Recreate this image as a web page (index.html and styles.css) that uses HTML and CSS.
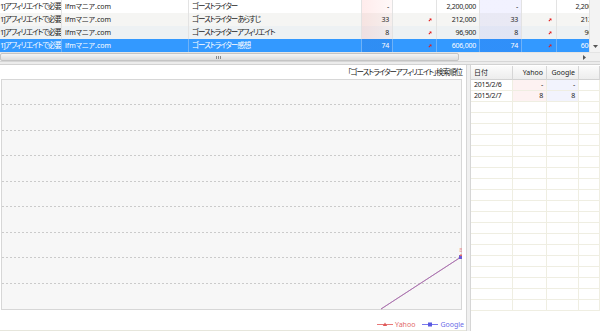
FILE: index.html
```html
<!DOCTYPE html>
<html lang="ja">
<head>
<meta charset="utf-8">
<title>検索順位</title>
<link rel="stylesheet" href="styles.css">
</head>
<body>
<div class="app">
  <div class="top">
    <div class="grid-wrap">
      <div class="grid">
        <div class="row r1">
          <div class="cell c1 jp">1]アフィリエイトで必要!!</div>
          <div class="cell">lfmマニア.com</div>
          <div class="cell jp">ゴーストライター</div>
          <div class="cell num ya">-</div>
          <div class="cell arr"></div>
          <div class="cell num">2,200,000</div>
          <div class="cell num go">-</div>
          <div class="cell arr"></div>
          <div class="cell num">2,200,000</div>
        </div>
        <div class="row r2">
          <div class="cell c1 jp">1]アフィリエイトで必要!!</div>
          <div class="cell">lfmマニア.com</div>
          <div class="cell jp">ゴーストライターあらすじ</div>
          <div class="cell num ya">33</div>
          <div class="cell arr"><svg class="up" viewBox="0 0 6 6"><path d="M1.2 4.8L4.2 1.8" /><polygon points="2,0.8 5.2,0.8 5.2,4" /></svg></div>
          <div class="cell num">212,000</div>
          <div class="cell num go">33</div>
          <div class="cell arr"><svg class="up" viewBox="0 0 6 6"><path d="M1.2 4.8L4.2 1.8" /><polygon points="2,0.8 5.2,0.8 5.2,4" /></svg></div>
          <div class="cell num">212,000</div>
        </div>
        <div class="row r3">
          <div class="cell c1 jp">1]アフィリエイトで必要!!</div>
          <div class="cell">lfmマニア.com</div>
          <div class="cell jp">ゴーストライターアフィリエイト</div>
          <div class="cell num ya">8</div>
          <div class="cell arr"><svg class="up" viewBox="0 0 6 6"><path d="M1.2 4.8L4.2 1.8" /><polygon points="2,0.8 5.2,0.8 5.2,4" /></svg></div>
          <div class="cell num">96,900</div>
          <div class="cell num go">8</div>
          <div class="cell arr"><svg class="up" viewBox="0 0 6 6"><path d="M1.2 4.8L4.2 1.8" /><polygon points="2,0.8 5.2,0.8 5.2,4" /></svg></div>
          <div class="cell num">96,900</div>
        </div>
        <div class="row sel">
          <div class="cell c1 jp">1]アフィリエイトで必要!!</div>
          <div class="cell">lfmマニア.com</div>
          <div class="cell jp">ゴーストライター感想</div>
          <div class="cell num ya">74</div>
          <div class="cell arr"><svg class="up" viewBox="0 0 6 6"><path d="M1.2 4.8L4.2 1.8" /><polygon points="2,0.8 5.2,0.8 5.2,4" /></svg></div>
          <div class="cell num">606,000</div>
          <div class="cell num go">74</div>
          <div class="cell arr"><svg class="up" viewBox="0 0 6 6"><path d="M1.2 4.8L4.2 1.8" /><polygon points="2,0.8 5.2,0.8 5.2,4" /></svg></div>
          <div class="cell num">606,000</div>
        </div>
      </div>
      <div class="vscroll">
        <svg class="sarrow" viewBox="0 0 5 3"><polygon points="0,0 5,0 2.5,3" /></svg>
      </div>
    </div>
    <div class="hscroll">
      <div class="track">
        <div class="thumb"><span class="grip"></span><span class="grip"></span><span class="grip"></span></div>
        <svg class="rarrow" viewBox="0 0 3 5"><polygon points="0,0 3,2.5 0,5" /></svg>
      </div>
      <div class="corner"></div>
    </div>
  </div>
  <div class="hsplit"></div>
  <div class="bottom">
    <div class="chart">
      <div class="title jp">「ゴーストライターアフィリエイト」検索順位</div>
      <div class="plot">
        <svg width="462" height="231" viewBox="0 0 462 231">
          <rect x="1.5" y="0.5" width="460" height="230" fill="#f7f7f7" stroke="#d7d7d7" />
          <g stroke="#cbcbcb" stroke-dasharray="2 2">
            <line x1="2" y1="25.5" x2="461" y2="25.5" />
            <line x1="2" y1="51.5" x2="461" y2="51.5" />
            <line x1="2" y1="76.5" x2="461" y2="76.5" />
            <line x1="2" y1="102.5" x2="461" y2="102.5" />
            <line x1="2" y1="127.5" x2="461" y2="127.5" />
            <line x1="2" y1="153.5" x2="461" y2="153.5" />
            <line x1="2" y1="178.5" x2="461" y2="178.5" />
            <line x1="2" y1="204.5" x2="461" y2="204.5" />
          </g>
          <line x1="381" y1="230" x2="461" y2="178" stroke="#e07070" stroke-width="1" />
          <line x1="381" y1="230" x2="461" y2="178" stroke="#7a7aee" stroke-width="1" opacity="0.6" />
          <rect x="459" y="176" width="4" height="4" fill="#6a5ad8" />
          <polygon points="459,177 461,175 463,177" fill="#e06a6a" />
          <text x="461" y="173" class="ptlabel">8</text>
        </svg>
      </div>
      <div class="legend">
        <div class="lg yahoo">
          <svg class="lmark" viewBox="0 0 16 7"><line x1="0" y1="3.5" x2="16" y2="3.5" stroke="#e87878" /><polygon points="8,1.5 10.2,5 5.8,5" fill="#e05a5a" /></svg>
          <span>Yahoo</span>
        </div>
        <div class="lg google">
          <svg class="lmark" viewBox="0 0 16 7"><line x1="0" y1="3.5" x2="16" y2="3.5" stroke="#7878ee" /><rect x="6" y="1.5" width="4" height="4" fill="#5a5ae0" /></svg>
          <span>Google</span>
        </div>
      </div>
    </div>
    <div class="vsplit"></div>
    <div class="rtable">
      <div class="trow head">
        <div class="tc">日付</div>
        <div class="tc num">Yahoo</div>
        <div class="tc num">Google</div>
        <div class="tc"></div>
      </div>
      <div class="trow">
        <div class="tc">2015/2/6</div>
        <div class="tc num ty">-</div>
        <div class="tc num tg">-</div>
        <div class="tc"></div>
      </div>
      <div class="trow">
        <div class="tc">2015/2/7</div>
        <div class="tc num ty">8</div>
        <div class="tc num tg">8</div>
        <div class="tc"></div>
      </div>
      <div class="trow"><div class="tc"></div><div class="tc"></div><div class="tc"></div><div class="tc"></div></div>
      <div class="trow"><div class="tc"></div><div class="tc"></div><div class="tc"></div><div class="tc"></div></div>
      <div class="trow"><div class="tc"></div><div class="tc"></div><div class="tc"></div><div class="tc"></div></div>
      <div class="trow"><div class="tc"></div><div class="tc"></div><div class="tc"></div><div class="tc"></div></div>
      <div class="trow"><div class="tc"></div><div class="tc"></div><div class="tc"></div><div class="tc"></div></div>
      <div class="trow"><div class="tc"></div><div class="tc"></div><div class="tc"></div><div class="tc"></div></div>
      <div class="trow"><div class="tc"></div><div class="tc"></div><div class="tc"></div><div class="tc"></div></div>
      <div class="trow"><div class="tc"></div><div class="tc"></div><div class="tc"></div><div class="tc"></div></div>
      <div class="trow"><div class="tc"></div><div class="tc"></div><div class="tc"></div><div class="tc"></div></div>
      <div class="trow"><div class="tc"></div><div class="tc"></div><div class="tc"></div><div class="tc"></div></div>
      <div class="trow"><div class="tc"></div><div class="tc"></div><div class="tc"></div><div class="tc"></div></div>
      <div class="trow"><div class="tc"></div><div class="tc"></div><div class="tc"></div><div class="tc"></div></div>
      <div class="trow"><div class="tc"></div><div class="tc"></div><div class="tc"></div><div class="tc"></div></div>
      <div class="trow"><div class="tc"></div><div class="tc"></div><div class="tc"></div><div class="tc"></div></div>
      <div class="trow"><div class="tc"></div><div class="tc"></div><div class="tc"></div><div class="tc"></div></div>
      <div class="trow"><div class="tc"></div><div class="tc"></div><div class="tc"></div><div class="tc"></div></div>
      <div class="trow"><div class="tc"></div><div class="tc"></div><div class="tc"></div><div class="tc"></div></div>
      <div class="trow"><div class="tc"></div><div class="tc"></div><div class="tc"></div><div class="tc"></div></div>
      <div class="trow"><div class="tc"></div><div class="tc"></div><div class="tc"></div><div class="tc"></div></div>
    </div>
  </div>
</div>
</body>
</html>
```
FILE: styles.css
```css
* { box-sizing: border-box; }

html, body {
  margin: 0;
  padding: 0;
}

body {
  width: 600px;
  height: 331px;
  overflow: hidden;
  background: #fff;
  color: #1c1c1c;
  font-family: "Noto Sans", "Noto Sans CJK JP", sans-serif;
  font-size: 7px;
  font-feature-settings: "palt";
}

.app {
  display: flex;
  flex-direction: column;
  height: 331px;
}

.jp {
  font-size: 7.5px;
  letter-spacing: -1px;
}

/* ---------- top grid ---------- */
.top { flex: none; }

.grid-wrap {
  display: flex;
  height: 53px;
  border-bottom: 1px solid #e4e4e4;
}

.grid {
  width: 589px;
  overflow: hidden;
}

.row {
  display: grid;
  grid-template-columns: 62px 127px 173px 31px 44px 43px 42px 35px 52px;
  width: 609px;
  height: 13px;
}

.r1 { background: #ffffff; }
.r2 { background: #f5f5f3; }
.r3 { background: #edf1f3; }
.sel { background: #3399ff; color: #fff; }

.cell {
  padding: 0 3px;
  line-height: 13px;
  white-space: nowrap;
  overflow: hidden;
  border-right: 1px solid #e3e3e3;
}

.c1 { padding-left: 0; }

.sel .cell { border-right-color: #6fb2f7; }

.num {
  text-align: right;
  letter-spacing: -0.25px;
}

.ya { background-image: linear-gradient(90deg, rgba(255, 120, 120, 0.14), rgba(255, 120, 120, 0.05)); }
.go { background-image: linear-gradient(rgba(110, 110, 255, 0.09), rgba(110, 110, 255, 0.09)); }
.sel .ya { background-image: linear-gradient(rgba(20, 60, 160, 0.12), rgba(20, 60, 160, 0.12)); }
.sel .go { background-image: linear-gradient(rgba(20, 60, 200, 0.1), rgba(20, 60, 200, 0.1)); }

.arr {
  display: flex;
  justify-content: flex-end;
  align-items: center;
  padding-right: 4px;
}

.up {
  width: 4px;
  height: 4px;
}
.up path { stroke: #e41c1c; stroke-width: 1.6; fill: none; }
.up polygon { fill: #e41c1c; }

.vscroll {
  width: 11px;
  background: #f3f3f3;
  border-left: 1px solid #e2e2e2;
  display: flex;
  flex-direction: column;
  justify-content: flex-end;
  align-items: center;
  padding-bottom: 4px;
}

.sarrow { width: 5px; height: 3px; fill: #555; }

.hscroll {
  display: flex;
  height: 9px;
  background: #efefef;
  border-bottom: 1px solid #d6d6d6;
}

.track {
  width: 589px;
  display: flex;
  align-items: center;
  padding-right: 3px;
}

.thumb {
  width: 459px;
  height: 8px;
  border: 1px solid #c4c4c4;
  border-radius: 2px;
  background: linear-gradient(#f4f4f4, #dcdcdc);
  display: flex;
  align-items: center;
  gap: 1px;
  padding-left: 215px;
}

.grip {
  width: 1px;
  height: 3px;
  background: #8a8a8a;
}

.rarrow {
  width: 3px;
  height: 5px;
  fill: #555;
  margin-left: auto;
}

.corner {
  width: 11px;
  background: #f0f0f0;
}

.hsplit {
  flex: none;
  height: 3px;
  background: #ececec;
  border-bottom: 1px solid #d2d2d2;
}

/* ---------- bottom ---------- */
.bottom {
  flex: 1;
  display: flex;
  min-height: 0;
}

.chart {
  width: 466px;
  display: flex;
  flex-direction: column;
  border-bottom: 1px solid #e6e6dc;
}

.title {
  height: 14px;
  line-height: 14px;
  text-align: right;
  padding-right: 4px;
  color: #222;
}

.plot {
  height: 231px;
}

.plot svg { display: block; }

.ptlabel {
  font-family: "Noto Sans", sans-serif;
  font-size: 6px;
  fill: #e99090;
  text-anchor: middle;
}

.legend {
  flex: 1;
  display: flex;
  justify-content: flex-end;
  align-items: flex-start;
  gap: 7px;
  padding-top: 10px;
  padding-right: 2px;
}

.lg {
  display: flex;
  align-items: center;
  gap: 2px;
  height: 9px;
  line-height: 9px;
}

.lmark { width: 16px; height: 7px; }

.yahoo { color: #e26a6a; }
.google { color: #6c6ce8; }

.vsplit {
  width: 5px;
  background: #f0f0f0;
  border-left: 1px solid #d6d6d6;
  border-right: 1px solid #d6d6d6;
}

.rtable {
  flex: 1;
  overflow: hidden;
  padding-top: 1px;
}

.trow {
  display: grid;
  grid-template-columns: 42px 34px 32px 21px;
  height: 11px;
}

.tc {
  padding: 0 3px;
  line-height: 10px;
  white-space: nowrap;
  border-right: 1px solid #efeee2;
  border-bottom: 1px solid #efeee2;
  letter-spacing: -0.2px;
}

.head {
  height: 14px;
}

.head .tc {
  line-height: 13px;
  background: linear-gradient(#fbfbfb, #ededed);
  border-right: 1px solid #d6d6d6;
  border-bottom: 1px solid #d2d2d2;
  letter-spacing: 0;
}

.ty { background: #fdf2f2; }
.tg { background: #f2f3fd; }
```
